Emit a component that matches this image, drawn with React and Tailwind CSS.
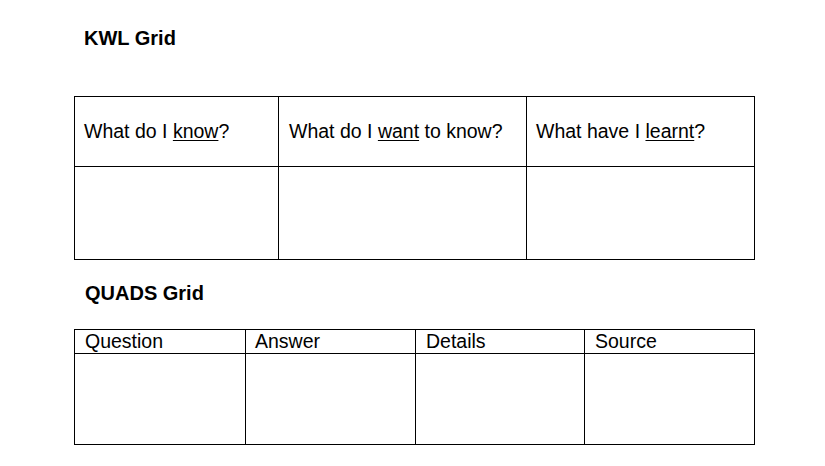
export default function App() {
  const font = { fontFamily: '"Liberation Sans", Arial, sans-serif' };
  return (
    <div className="w-[825px] h-[466px] bg-white text-black pl-[74px]" style={font}>
      <h1 className="pt-[27px] pl-[10px] text-[20px] leading-[23px] font-bold">KWL Grid</h1>

      <div className="mt-[46px] w-[681px] grid grid-cols-[204px_248px_228px] grid-rows-[70px_93px] border-l border-t border-black text-[19.5px]">
        <div className="border-r border-b border-black flex items-center pl-[9px]">
          <span>
            What do I <span className="underline decoration-1 underline-offset-[2px]">know</span>?
          </span>
        </div>
        <div className="border-r border-b border-black flex items-center pl-[10px]">
          <span>
            What do I <span className="underline decoration-1 underline-offset-[2px]">want</span> to know?
          </span>
        </div>
        <div className="border-r border-b border-black flex items-center pl-[9px]">
          <span>
            What have I <span className="underline decoration-1 underline-offset-[2px]">learnt</span>?
          </span>
        </div>
        <div className="border-r border-b border-black" />
        <div className="border-r border-b border-black" />
        <div className="border-r border-b border-black" />
      </div>

      <h2 className="mt-[22px] pl-[11px] text-[20px] leading-[23px] font-bold">QUADS Grid</h2>

      <div className="mt-[24px] w-[681px] grid grid-cols-[171px_170px_169px_170px] grid-rows-[24px_91px] border-l border-t border-black text-[19.5px] leading-[23px]">
        <div className="border-r border-b border-black pl-[10px]">Question</div>
        <div className="border-r border-b border-black pl-[9px]">Answer</div>
        <div className="border-r border-b border-black pl-[10px]">Details</div>
        <div className="border-r border-b border-black pl-[10px]">Source</div>
        <div className="border-r border-b border-black" />
        <div className="border-r border-b border-black" />
        <div className="border-r border-b border-black" />
        <div className="border-r border-b border-black" />
      </div>
    </div>
  );
}
